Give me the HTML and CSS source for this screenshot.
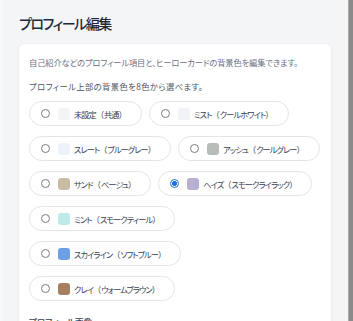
FILE: index.html
```html
<!DOCTYPE html>
<html lang="ja">
<head>
<meta charset="utf-8">
<title>プロフィール編集</title>
<link rel="stylesheet" href="styles.css">
</head>
<body>
<div class="frame">
  <main class="page">
    <h1 class="title">プロフィール編集</h1>
    <section class="card">
      <p class="desc">自己紹介などのプロフィール項目と、ヒーローカードの背景色を編集できます。</p>
      <p class="hint">プロフィール上部の背景色を8色から選べます。</p>
      <div class="options">
        <label class="pill"><input type="radio" name="bg" class="radio"><span class="swatch" style="background:#f3f4f6"></span><span class="label">未設定<span class="paren">（</span>共通<span class="paren">）</span></span></label>
        <label class="pill"><input type="radio" name="bg" class="radio"><span class="swatch" style="background:#f1f3f6"></span><span class="label">ミスト<span class="paren">（</span>クールホワイト<span class="paren">）</span></span></label>
        <label class="pill"><input type="radio" name="bg" class="radio"><span class="swatch" style="background:#edf2fa"></span><span class="label">スレート<span class="paren">（</span>ブルーグレー<span class="paren">）</span></span></label>
        <label class="pill"><input type="radio" name="bg" class="radio"><span class="swatch" style="background:#b6bdb9"></span><span class="label">アッシュ<span class="paren">（</span>クールグレー<span class="paren">）</span></span></label>
        <label class="pill"><input type="radio" name="bg" class="radio"><span class="swatch" style="background:#c9bca6"></span><span class="label">サンド<span class="paren">（</span>ベージュ<span class="paren">）</span></span></label>
        <label class="pill"><input type="radio" name="bg" class="radio" checked><span class="swatch" style="background:#b9afd1"></span><span class="label">ヘイズ<span class="paren">（</span>スモークライラック<span class="paren">）</span></span></label>
        <label class="pill"><input type="radio" name="bg" class="radio"><span class="swatch" style="background:#c0e9ea"></span><span class="label">ミント<span class="paren">（</span>スモークティール<span class="paren">）</span></span></label>
        <label class="pill"><input type="radio" name="bg" class="radio"><span class="swatch" style="background:#6d9fe6"></span><span class="label">スカイライン<span class="paren">（</span>ソフトブルー<span class="paren">）</span></span></label>
        <label class="pill"><input type="radio" name="bg" class="radio"><span class="swatch" style="background:#a67f60"></span><span class="label">クレイ<span class="paren">（</span>ウォームブラウン<span class="paren">）</span></span></label>
      </div>
      <p class="section">プロフィール画像</p>
    </section>
  </main>
  <div class="scrollbar"></div>
</div>
</body>
</html>
```
FILE: styles.css
```css
html, body {
  margin: 0;
  padding: 0;
  height: 100%;
  overflow: hidden;
}
body {
  background: #f4f5f7;
  font-family: "Noto Sans CJK JP", "Noto Sans", sans-serif;
  font-feature-settings: "palt";
  color: #374151;
}
.frame {
  display: flex;
  height: 100%;
}
.page {
  flex: 1;
  padding: 12px 16px 0 18px;
  border-left: 3px solid #f8f9fa;
  box-sizing: border-box;
}
.scrollbar {
  width: 4px;
  background: #8a8a8a;
  border-left: 1px solid #a9a9a9;
}
.title {
  margin: 0 0 9px -2px;
  font-size: 14px;
  font-weight: 500;
  letter-spacing: -1.5px;
  line-height: 22px;
  color: #1f2937;
}
.card {
  background: #fff;
  border: 1px solid #eceef1;
  border-radius: 6px;
  padding: 11px 8px 0 10px;
  margin-left: -3px;
  box-shadow: 0 1px 2px rgba(0,0,0,0.03);
}
.desc {
  margin: 0 0 10px;
  font-size: 8.3px;
  letter-spacing: -0.15px;
  line-height: 14px;
  color: #6b7280;
}
.hint {
  margin: 0 0 8px;
  font-size: 8.3px;
  letter-spacing: 0.4px;
  line-height: 14px;
  color: #4b5563;
}
.options {
  display: flex;
  flex-wrap: wrap;
  gap: 10px 7px;
}
.pill {
  display: inline-flex;
  align-items: center;
  box-sizing: border-box;
  height: 25px;
  padding: 0 14px 0 11px;
  border: 1px solid #e3e5e8;
  border-radius: 999px;
  background: #fff;
}
.radio {
  appearance: none;
  -webkit-appearance: none;
  margin: 0 8px 0 0;
  width: 9px;
  height: 9px;
  border: 1px solid #7a7a7a;
  border-radius: 50%;
  box-sizing: border-box;
  background: #fff;
}
.radio:checked {
  border-color: #1a73e8;
  background: radial-gradient(circle, #1a73e8 0 2.2px, #fff 2.7px);
}
.swatch {
  width: 12px;
  height: 12px;
  border-radius: 3px;
  margin-right: 4px;
}
.label {
  font-size: 8.2px;
  letter-spacing: -0.9px;
  line-height: 12px;
  color: #374151;
}
.paren {
  font-feature-settings: normal;
  letter-spacing: 0;
}
.section {
  margin: 14px 0 0;
  font-size: 8.5px;
  font-weight: 500;
  line-height: 12px;
  color: #374151;
}
```
